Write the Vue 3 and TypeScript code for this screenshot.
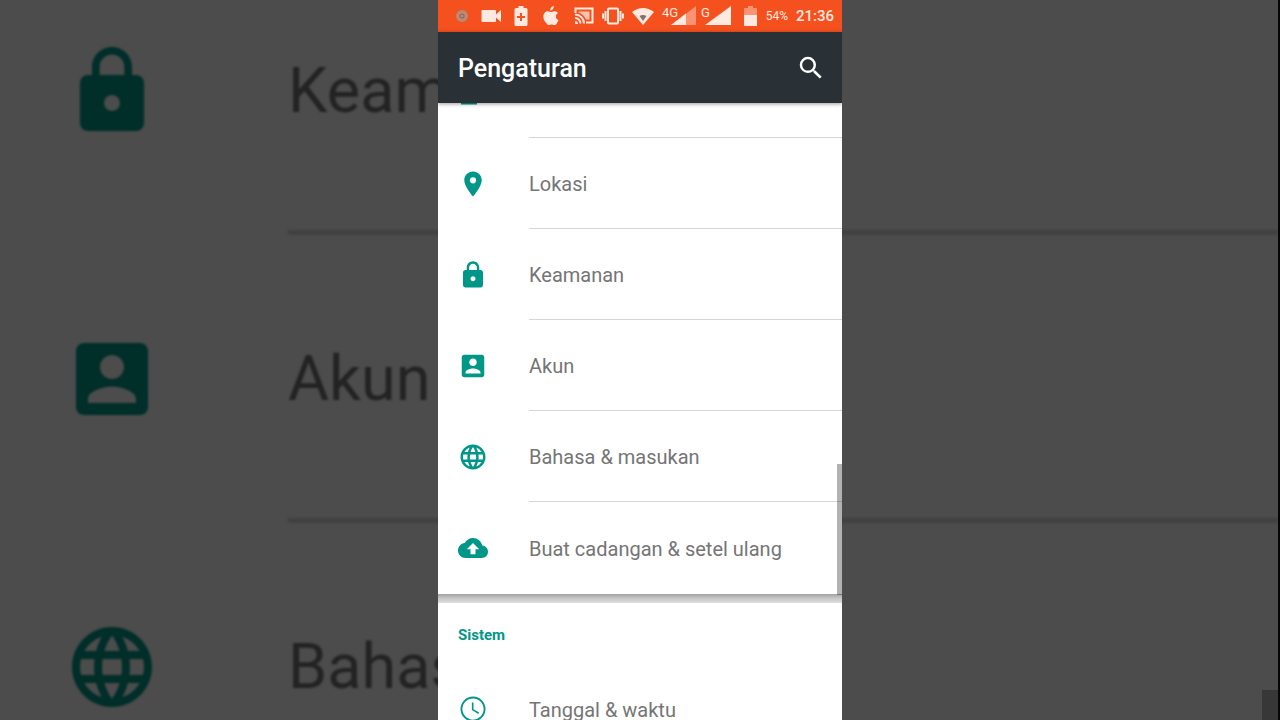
<script setup lang="ts">
interface Entry {
  label: string
  paths: string[]
}

const icons = {
  place: 'M12 2C8.13 2 5 5.13 5 9c0 5.25 7 13 7 13s7-7.75 7-13c0-3.87-3.13-7-7-7zm0 9.5a2.5 2.5 0 0 1 0-5 2.5 2.5 0 0 1 0 5z',
  lock: 'M18 8h-1V6c0-2.76-2.24-5-5-5S7 3.24 7 6v2H6c-1.1 0-2 .9-2 2v10c0 1.1.9 2 2 2h12c1.1 0 2-.9 2-2V10c0-1.1-.9-2-2-2zm-6 9c-1.1 0-2-.9-2-2s.9-2 2-2 2 .9 2 2-.9 2-2 2zm3.1-9H8.9V6c0-1.71 1.39-3.1 3.1-3.1 1.71 0 3.1 1.39 3.1 3.1v2z',
  account: 'M5 3c-1.1 0-2 .9-2 2v14c0 1.1.9 2 2 2h14c1.1 0 2-.9 2-2V5c0-1.1-.9-2-2-2H5zm10 6c0 1.66-1.34 3-3 3s-3-1.34-3-3 1.34-3 3-3 3 1.34 3 3zm-9 8c0-2 4-3.1 6-3.1s6 1.1 6 3.1v1H6v-1z',
  globe: 'M11.99 2C6.47 2 2 6.48 2 12s4.47 10 9.99 10C17.52 22 22 17.52 22 12S17.52 2 11.99 2zm6.93 6h-2.95a15.65 15.65 0 0 0-1.38-3.56A8.03 8.03 0 0 1 18.92 8zM12 4.04c.83 1.2 1.48 2.53 1.91 3.96h-3.82c.43-1.43 1.08-2.76 1.91-3.96zM4.26 14C4.1 13.36 4 12.69 4 12s.1-1.36.26-2h3.38c-.08.66-.14 1.32-.14 2 0 .68.06 1.34.14 2H4.26zm.82 2h2.95c.32 1.25.78 2.45 1.38 3.56A7.987 7.987 0 0 1 5.08 16zm2.95-8H5.08a7.987 7.987 0 0 1 4.33-3.56A15.65 15.65 0 0 0 8.03 8zM12 19.96c-.83-1.2-1.48-2.53-1.91-3.96h3.82c-.43 1.43-1.08 2.76-1.91 3.96zM14.34 14H9.66c-.09-.66-.16-1.32-.16-2 0-.68.07-1.35.16-2h4.68c.09.65.16 1.32.16 2 0 .68-.07 1.34-.16 2zm.25 5.56c.6-1.11 1.06-2.31 1.38-3.56h2.95a8.03 8.03 0 0 1-4.33 3.56zM16.36 14c.08-.66.14-1.32.14-2 0-.68-.06-1.34-.14-2h3.38c.16.64.26 1.31.26 2s-.1 1.36-.26 2h-3.38z',
  cloud: 'M19.35 10.04C18.67 6.59 15.64 4 12 4 9.11 4 6.6 5.64 5.35 8.04 2.34 8.36 0 10.91 0 14c0 3.31 2.69 6 6 6h13c2.76 0 5-2.24 5-5 0-2.64-2.05-4.78-4.65-4.96zM14 13v4h-4v-4H7l5-5 5 5h-3z',
  clockFace: 'M12 2a10 10 0 1 0 0 20 10 10 0 0 0 0-20zm0 18.5a8.5 8.5 0 1 1 0-17 8.5 8.5 0 0 1 0 17z',
  clockHands: 'M12.4 6.8H11.1v6l5.1 3.1.7-1.1-4.5-2.7z',
}

const personal: Entry[] = [
  { label: 'Lokasi', paths: [icons.place] },
  { label: 'Keamanan', paths: [icons.lock] },
  { label: 'Akun', paths: [icons.account] },
  { label: 'Bahasa & masukan', paths: [icons.globe] },
  { label: 'Buat cadangan & setel ulang', paths: [icons.cloud] },
]
const system: Entry[] = [{ label: 'Tanggal & waktu', paths: [icons.clockFace, icons.clockHands] }]
const enlarged = personal.slice(1, 4)
</script>

<template>
  <div class="stage">
    <div class="backdrop" aria-hidden="true">
      <div v-for="item in enlarged" :key="item.label" class="big-row">
        <svg class="big-icon" viewBox="0 0 24 24">
          <path v-for="d in item.paths" :key="d" :d="d" />
        </svg>
        <span class="big-label">{{ item.label }}</span>
      </div>
      <div class="big-thumb"></div>
    </div>

    <main class="phone">
      <div class="status">
        <div class="notices">
          <svg width="12" height="20" viewBox="0 0 12 20">
            <circle cx="6" cy="10" r="6" fill="#b98a76" />
            <circle cx="6" cy="10" r="2.6" fill="#a06a58" />
            <circle cx="6" cy="10" r="1" fill="#c79c8a" />
          </svg>
          <svg width="20" height="20" viewBox="0 0 20 20">
            <path d="M1.500 4H14q1 0 1 1v3.500l5-4.500v12l-5-4.500V15q0 1-1 1H1.500q-1 0-1-1V5q0-1 1-1z" />
          </svg>
          <svg width="14" height="20" viewBox="0 0 14 20">
            <path fill-rule="evenodd" d="M4.500 0h5v2H12q1.500 0 1.500 1.500v15q0 1.500-1.500 1.500H2Q.5 20 .5 18.500v-15Q.5 2 2 2h2.500zM6 7v3H3v2h3v3h2v-3h3v-2H8V7z" />
          </svg>
          <svg width="20" height="20" viewBox="0 0 20 20">
            <path d="M12.800 0c.1 1.300-.4 2.500-1.100 3.300-.7.900-1.700 1.400-2.600 1.300-.1-1.200.4-2.300 1.100-3.100C10.900.7 12 .1 12.800 0zM17 7c-1.400.9-2.100 2-2.100 3.400 0 1.700 1 3 2.600 3.700-.4 1.300-1 2.400-1.800 3.400-.8 1-1.400 1.600-2.400 1.600-1.100 0-1.500-.6-2.700-.6-1.300 0-1.700.6-2.600.6-1.100 0-1.800-.8-2.500-1.800C3.400 15.600 2.300 13.200 2.300 10.800c0-3.700 2.300-5.600 4.700-5.600 1.200 0 2.200.8 3.100.8.700 0 1.900-.8 3.400-.8 1.200 0 2.700.6 3.500 1.800z" />
          </svg>
        </div>
        <div class="system-icons">
          <svg width="20" height="20" viewBox="0 0 20 20" class="line">
            <path d="M1.500 7V2.500h17v14H12" />
            <path d="M4.500 6.500v-1h11v8H12q-2-5-7.500-7z" fill="#fbc3ad" stroke="none" />
            <path d="M1 8.500a9 9 0 0 1 9 9M1 12a5.500 5.500 0 0 1 5.500 5.500" />
            <path d="M1 15a3 3 0 0 1 3 3H1z" class="solid" />
          </svg>
          <svg width="22" height="20" viewBox="0 0 22 20" class="line">
            <rect x="6" y="2.500" width="10" height="15" rx="1" />
            <path d="M3.500 5v10M18.500 5v10M1 7.500v5M21 7.500v5" />
          </svg>
          <svg width="22" height="20" viewBox="0 0 22 20">
            <path d="M0 6Q11-2 22 6L11 19z" />
            <path d="M7.500 10q3.500-2 7 0L11 15z" fill="#7d7471" />
          </svg>
          <div class="signals">
            <svg width="35" height="22" viewBox="0 0 35 22">
              <path d="M34 1v19H9z" fill="#fb9372" />
              <path d="M24 8.600V20H9z" />
              <text x="0" y="12">4G</text>
            </svg>
            <svg width="35" height="22" viewBox="0 0 35 22">
              <path d="M30 1v19H4z" />
              <text x="0" y="12">G</text>
            </svg>
          </div>
          <svg width="14" height="20" viewBox="0 0 14 20">
            <path d="M4 0h5v2h4v8H0V2h4z" fill="#fb9372" />
            <path d="M0 9h13v11H0z" />
          </svg>
          <span class="percent">54%</span>
          <time class="clock">21:36</time>
        </div>
      </div>

      <header class="appbar">
        <h1>Pengaturan</h1>
        <button type="button" class="search" aria-label="Telusuri">
          <svg width="30" height="30" viewBox="0 0 24 24">
            <path d="M15.500 14h-.79l-.28-.27A6.471 6.471 0 0 0 16 9.500 6.500 6.500 0 1 0 9.500 16c1.610 0 3.090-.59 4.230-1.570l.27.28v.79l5 4.990L20.490 19l-4.990-5zm-6 0C7.010 14 5 11.990 5 9.500S7.010 5 9.500 5 14 7.010 14 9.500 11.990 14 9.500 14z" />
          </svg>
        </button>
      </header>

      <div class="content">
        <section class="card">
          <div class="row partial">
            <svg class="icon" viewBox="0 0 30 30"><path d="M3 0h16v1.500H3z" /></svg>
            <span class="label"></span>
          </div>
          <a v-for="item in personal" :key="item.label" href="#" class="row">
            <svg class="icon" viewBox="0 0 24 24">
              <path v-for="d in item.paths" :key="d" :d="d" />
            </svg>
            <span class="label">{{ item.label }}</span>
          </a>
        </section>
        <div class="divider"></div>
        <section class="card">
          <h2>Sistem</h2>
          <a v-for="item in system" :key="item.label" href="#" class="row">
            <svg class="icon" viewBox="0 0 24 24">
              <path v-for="d in item.paths" :key="d" :d="d" />
            </svg>
            <span class="label">{{ item.label }}</span>
          </a>
        </section>
        <div class="thumb"></div>
      </div>
    </main>
  </div>
</template>

<style>
body {
  margin: 0;
  background: #4c4c4c;
}
</style>

<style scoped>
.stage {
  position: relative;
  display: flex;
  justify-content: center;
  height: 100vh;
  overflow: hidden;
  background: #4c4c4c;
  font-family: Roboto, 'Liberation Sans', sans-serif;
}
.backdrop {
  position: absolute;
  inset: 0;
  overflow: hidden;
  border-right: 2px solid #060606;
}
.big-row {
  display: flex;
  align-items: center;
  gap: 128px;
  height: 288px;
  padding-left: 64px;
  filter: blur(1px);
}
.big-row:first-child {
  margin-top: -53px;
}
.big-icon {
  flex: none;
  width: 96px;
  height: 96px;
  fill: #002e29;
}
.big-label {
  display: flex;
  flex: 1;
  align-items: center;
  box-sizing: border-box;
  height: 100%;
  padding-top: 4px;
  border-bottom: 5px solid #414141;
  color: #232323;
  font-size: 63px;
}
.big-thumb {
  position: absolute;
  top: 690px;
  right: 0;
  width: 16px;
  height: 416px;
  background: #373737;
}
.phone {
  position: relative;
  display: flex;
  flex-direction: column;
  width: 404px;
  max-width: 100%;
  overflow: hidden;
  background: #fff;
}
.status {
  display: flex;
  flex: none;
  align-items: center;
  justify-content: space-between;
  box-sizing: border-box;
  height: 32px;
  padding: 0 8px 0 18px;
  background: #f4511e;
  color: #ffe9e1;
}
.status svg {
  display: block;
  fill: #ffe9e1;
}
.status .line {
  fill: none;
  stroke: #ffe9e1;
  stroke-width: 2;
}
.status .solid {
  fill: #ffe9e1;
  stroke: none;
}
.status text {
  font-size: 13px;
}
.notices {
  display: flex;
  gap: 13px;
}
.system-icons {
  display: flex;
  align-items: center;
  gap: 8px;
}
.signals {
  display: flex;
  gap: 4px;
}
.percent {
  font-size: 12px;
}
.clock {
  font-size: 15px;
  font-weight: 500;
}
.appbar {
  position: relative;
  z-index: 1;
  display: flex;
  flex: none;
  align-items: center;
  justify-content: space-between;
  box-sizing: border-box;
  height: 71px;
  padding: 0 16px 0 20px;
  background: #293136;
  box-shadow: 0 1px 4px rgba(0, 0, 0, 0.4);
  color: #fff;
}
h1 {
  margin: 0;
  padding-top: 2px;
  font-size: 25px;
  font-weight: 500;
}
.search {
  padding: 0;
  border: 0;
  background: none;
  cursor: pointer;
}
.search svg {
  display: block;
  fill: #fff;
}
.content {
  position: relative;
}
.row {
  display: flex;
  align-items: center;
  gap: 41px;
  height: 91px;
  padding-left: 20px;
  color: #757575;
  text-decoration: none;
}
.icon {
  flex: none;
  width: 30px;
  height: 30px;
  fill: #009688;
}
.label {
  display: flex;
  flex: 1;
  align-items: center;
  box-sizing: border-box;
  height: 100%;
  padding-top: 2px;
  border-bottom: 1px solid #d6d6d6;
  font-size: 20px;
}
.row:last-child .label {
  border-bottom: 0;
}
.partial {
  align-items: flex-start;
  height: 35px;
}
.card {
  background: #fff;
}
.card .row:last-child {
  height: 92px;
}
.divider {
  height: 9px;
  background: linear-gradient(#a2a2a2, #c8c8c8 50%, #dedede);
}
h2 {
  margin: 0;
  padding: 4px 0 0 20px;
  color: #009688;
  font-size: 15px;
  font-weight: 700;
  line-height: 56px;
}
.thumb {
  position: absolute;
  top: 361px;
  right: 0;
  width: 5px;
  height: 131px;
  background: rgba(0, 0, 0, 0.3);
}
</style>
